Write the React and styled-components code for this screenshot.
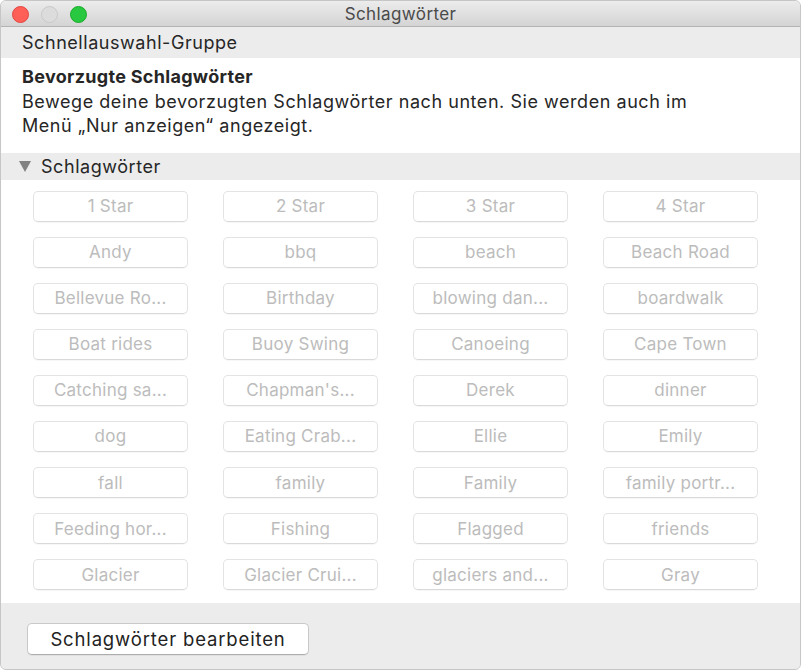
import React from "react";
import styled, { createGlobalStyle } from "styled-components";

const Global = createGlobalStyle`
  html, body { margin: 0; padding: 0; background: #ffffff; }
  body { font-family: Inter, "Noto Sans", sans-serif; }
`;

const Window = styled.div`
  box-sizing: border-box;
  width: 801px;
  height: 670px;
  border: 1px solid #c6c6c6;
  border-radius: 6px;
  overflow: hidden;
  display: flex;
  flex-direction: column;
  background: #ececec;
  color: #262626;
`;

const TitleBar = styled.div`
  position: relative;
  height: 25px;
  flex: none;
  border-bottom: 1px solid #b3b3b3;
  background: linear-gradient(#ececec, #d4d4d4);
  display: flex;
  align-items: center;
  justify-content: center;
  font-size: 17px;
  letter-spacing: 0.4px;
  color: #4a4a4a;
`;

const Lights = styled.div`
  position: absolute;
  left: 11px;
  top: 5px;
  display: flex;
  gap: 12px;
`;

const Light = styled.span`
  width: 17px;
  height: 17px;
  border-radius: 50%;
  box-sizing: border-box;
  background: ${(p) => p.$c};
  border: 1px solid ${(p) => p.$b};
`;

const SubHeader = styled.div`
  height: 31px;
  flex: none;
  display: flex;
  align-items: center;
  padding-left: 21px;
  font-size: 18px;
  letter-spacing: 0.55px;
  background: #ececec;
`;

const Body = styled.div`
  background: #ffffff;
  flex: none;
`;

const Intro = styled.div`
  padding: 7px 21px 14px;
  font-size: 18px;
  letter-spacing: 0.55px;
  line-height: 24.5px;
`;

const IntroTitle = styled.div`
  font-weight: 700;
  letter-spacing: 0.3px;
`;

const SectionBar = styled.div`
  height: 27px;
  display: flex;
  align-items: center;
  gap: 10px;
  padding-left: 18px;
  background: #ececec;
  font-size: 18px;
  letter-spacing: 0.55px;
`;

const Tri = styled.span`
  width: 0;
  height: 0;
  border-left: 6px solid transparent;
  border-right: 6px solid transparent;
  border-top: 11px solid #828282;
  margin-top: 1px;
`;

const Grid = styled.div`
  display: grid;
  grid-template-columns: repeat(4, 155px);
  column-gap: 35px;
  row-gap: 15.1px;
  padding: 11px 0 13px 32px;
`;

const Tag = styled.div`
  box-sizing: border-box;
  height: 31px;
  border: 1px solid #e3e3e3;
  border-bottom-color: #d9d9d9;
  border-radius: 5px;
  box-shadow: 0 1px 0 rgba(0, 0, 0, 0.03);
  display: flex;
  align-items: center;
  justify-content: center;
  font-size: 17px;
  letter-spacing: 0.25px;
  color: #bcbcbc;
  white-space: nowrap;
  overflow: hidden;
`;

const Footer = styled.div`
  flex: 1;
  background: #ececec;
  padding: 20px 0 0 26px;
`;

const Button = styled.button`
  box-sizing: border-box;
  width: 282px;
  height: 32px;
  border: 1px solid #c9c9c9;
  border-bottom-color: #adadad;
  border-radius: 5px;
  background: #ffffff;
  font-family: inherit;
  font-size: 18.5px;
  letter-spacing: 0.85px;
  color: #222222;
  padding: 0;
  box-shadow: 0 1px 1px rgba(0, 0, 0, 0.06);
`;

const tags = [
  "1 Star", "2 Star", "3 Star", "4 Star",
  "Andy", "bbq", "beach", "Beach Road",
  "Bellevue Ro...", "Birthday", "blowing dan...", "boardwalk",
  "Boat rides", "Buoy Swing", "Canoeing", "Cape Town",
  "Catching sa...", "Chapman's...", "Derek", "dinner",
  "dog", "Eating Crab...", "Ellie", "Emily",
  "fall", "family", "Family", "family portr...",
  "Feeding hor...", "Fishing", "Flagged", "friends",
  "Glacier", "Glacier Crui...", "glaciers and...", "Gray",
];

export default function App() {
  return (
    <>
      <Global />
      <Window>
        <TitleBar>
          <Lights>
            <Light $c="#fe5f57" $b="#e2463f" />
            <Light $c="#dcdcdc" $b="#c8c8c8" />
            <Light $c="#28c840" $b="#1aab29" />
          </Lights>
          Schlagwörter
        </TitleBar>
        <SubHeader>Schnellauswahl-Gruppe</SubHeader>
        <Body>
          <Intro>
            <IntroTitle>Bevorzugte Schlagwörter</IntroTitle>
            Bewege deine bevorzugten Schlagwörter nach unten. Sie werden auch im
            <br />
            Menü „Nur anzeigen“ angezeigt.
          </Intro>
          <SectionBar>
            <Tri />
            Schlagwörter
          </SectionBar>
          <Grid>
            {tags.map((t, i) => (
              <Tag key={i}>{t}</Tag>
            ))}
          </Grid>
        </Body>
        <Footer>
          <Button>Schlagwörter bearbeiten</Button>
        </Footer>
      </Window>
    </>
  );
}
